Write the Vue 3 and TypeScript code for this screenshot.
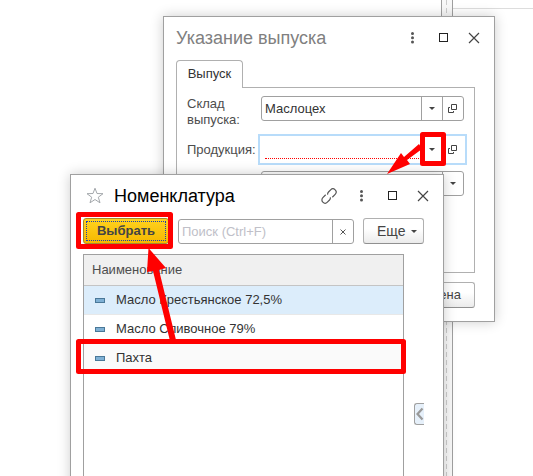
<script setup lang="ts">
import { ref } from 'vue'

interface Item {
  id: number
  name: string
}

const items: Item[] = [
  { id: 1, name: 'Масло Крестьянское 72,5%' },
  { id: 2, name: 'Масло Сливочное 79%' },
  { id: 3, name: 'Пахта' },
]
const selectedId = ref(1)
const warehouse = ref('Маслоцех')
const product = ref('')
const extra = ref('')
const search = ref('')
</script>

<template>
  <main class="desktop">
    <div class="backdrop">
      <div class="splitter"></div>
      <div class="side"></div>
    </div>

    <section class="window release" aria-labelledby="release-title">
      <header class="titlebar">
        <h2 id="release-title" class="title muted">Указание выпуска</h2>
        <div class="controls">
          <button type="button" class="ctl" aria-label="Меню">
            <svg viewBox="0 0 12 12"><g fill="#555"><circle cx="6.5" cy="1.6" r="1.5" /><circle cx="6.5" cy="5.8" r="1.5" /><circle cx="6.5" cy="10" r="1.5" /></g></svg>
          </button>
          <button type="button" class="ctl" aria-label="Развернуть">
            <svg viewBox="0 0 12 12"><rect x="2.5" y="1.5" width="8" height="8" fill="none" stroke="#222" /></svg>
          </button>
          <button type="button" class="ctl" aria-label="Закрыть">
            <svg viewBox="0 0 12 12"><path d="M1 1 11 11M11 1 1 11" stroke="#444" stroke-width="1.2" fill="none" /></svg>
          </button>
        </div>
      </header>

      <div class="tabs"><button type="button" class="tab">Выпуск</button></div>
      <div class="panel">
        <div class="row">
          <label for="warehouse">Склад выпуска:</label>
          <div class="field">
            <input id="warehouse" v-model="warehouse" type="text" />
            <button type="button" class="part" aria-label="Выбрать из списка"><i class="caret"></i></button>
            <button type="button" class="part" aria-label="Открыть">
              <svg class="open" viewBox="0 0 10 10"><path d="M3.5.5h5v5h-5zM2 3.500H.5v5h5V7" fill="none" stroke="#444" /></svg>
            </button>
          </div>
        </div>
        <div class="row">
          <label for="product">Продукция:</label>
          <div class="field active">
            <div class="required"><input id="product" v-model="product" type="text" /></div>
            <button type="button" class="part" aria-label="Выбрать из списка"><i class="caret"></i></button>
            <button type="button" class="part" aria-label="Открыть">
              <svg class="open" viewBox="0 0 10 10"><path d="M3.500.5h5v5h-5zM2 3.500H.5v5h5V7" fill="none" stroke="#444" /></svg>
            </button>
          </div>
        </div>
        <div class="row">
          <span></span>
          <div class="field">
            <input v-model="extra" type="text" aria-label="Значение" />
            <button type="button" class="part" aria-label="Выбрать из списка"><i class="caret"></i></button>
          </div>
        </div>
      </div>
      <footer class="footer"><button type="button" class="btn">Отмена</button></footer>
    </section>

    <section class="window catalog" aria-labelledby="catalog-title">
      <header class="titlebar">
        <button type="button" class="star" aria-label="В избранное">
          <svg viewBox="0 0 18 17"><path d="M9 1.200 11 6.500 17 6.700 12.300 10.200 14 15.800 9 12.500 4 15.800 5.700 10.200 1 6.700 7 6.500Z" fill="none" stroke="#a4a8ac" /></svg>
        </button>
        <h2 id="catalog-title" class="title">Номенклатура</h2>
        <button type="button" class="link" aria-label="Получить ссылку">
          <svg viewBox="0 0 16 16"><g transform="rotate(-45 8 8)" fill="none" stroke="#555" stroke-width="1.200"><path d="M6.500 4.800H2.500a3.200 3.200 0 0 0 0 6.400H5.500a3.200 3.200 0 0 0 2.500-1.300" /><path d="M9.500 11.200H13.500a3.200 3.200 0 0 0 0-6.400H10.500A3.200 3.200 0 0 0 8 6.100" /></g></svg>
        </button>
        <div class="controls">
          <button type="button" class="ctl" aria-label="Меню">
            <svg viewBox="0 0 12 12"><g fill="#555"><circle cx="6.5" cy="1.6" r="1.5" /><circle cx="6.5" cy="5.8" r="1.5" /><circle cx="6.5" cy="10" r="1.5" /></g></svg>
          </button>
          <button type="button" class="ctl" aria-label="Развернуть">
            <svg viewBox="0 0 12 12"><rect x="2.5" y="1.5" width="8" height="8" fill="none" stroke="#222" /></svg>
          </button>
          <button type="button" class="ctl" aria-label="Закрыть">
            <svg viewBox="0 0 12 12"><path d="M1 1 11 11M11 1 1 11" stroke="#444" stroke-width="1.2" fill="none" /></svg>
          </button>
        </div>
      </header>

      <div class="toolbar">
        <button type="button" class="btn primary">Выбрать</button>
        <div class="field search">
          <input v-model="search" type="text" placeholder="Поиск (Ctrl+F)" aria-label="Поиск" />
          <button type="button" class="part" aria-label="Очистить" @click="search = ''">
            <svg class="clear" viewBox="0 0 8 8"><path d="M1.500 1.500 6.500 6.500M6.500 1.500 1.500 6.500" stroke="#555" fill="none" /></svg>
          </button>
        </div>
        <button type="button" class="btn more">Еще <i class="caret"></i></button>
      </div>

      <div class="content">
        <div class="grid">
          <table>
            <thead><tr><th scope="col">Наименование</th></tr></thead>
            <tbody>
              <tr v-for="item in items" :key="item.id" :class="{ selected: item.id === selectedId }" @click="selectedId = item.id">
                <td><div class="cell"><i class="mark"></i>{{ item.name }}</div></td>
              </tr>
            </tbody>
          </table>
        </div>
        <button type="button" class="expand" aria-label="Показать панель">
          <svg viewBox="0 0 9 20"><path d="M7.500 4.500 2.500 10 7.500 15.500" fill="none" stroke="#999" stroke-width="2.200" /></svg>
        </button>
      </div>
    </section>

    <svg class="notes" width="533" height="476" viewBox="0 0 533 476" aria-hidden="true">
      <g fill="none" stroke="#f00" stroke-width="5" stroke-linejoin="round">
        <rect x="422.5" y="134.500" width="21" height="29" />
        <rect x="78.500" y="214.500" width="92" height="32" />
        <rect x="78.500" y="341.500" width="325" height="30" />
      </g>
      <g fill="#f00">
        <path d="M387 174 401 153 404 157 419 144 422 149 407 160 410 164Z" />
        <path d="M148.500 248 147 272 153 271 170 341 176 340 159 270 166 268Z" />
      </g>
    </svg>
  </main>
</template>

<style>
body {
  margin: 0;
  background: #fff;
}
</style>

<style scoped>
.desktop {
  position: relative;
  height: 100vh;
  overflow: hidden;
  font-family: 'Liberation Sans', Arial, sans-serif;
  font-size: 13px;
  line-height: 16px;
  color: #333;
}
.desktop * {
  box-sizing: border-box;
}
button,
input {
  margin: 0;
  padding: 0;
  border: 0;
  background: none;
  font: inherit;
  color: inherit;
  outline: 0;
}
svg {
  display: block;
}
.backdrop {
  display: flex;
  height: 100%;
  padding-left: 441px;
}
.splitter {
  width: 12px;
  flex: none;
  border: solid #a0a0a0;
  border-width: 0 1px;
  background: repeating-linear-gradient(#ccc 0 5px, transparent 5px 8px) 4px 0 / 1px 100% no-repeat #f8f8f8;
}
.side {
  flex: 1;
  height: 9px;
  border-bottom: 1px solid #ddd;
}
.window {
  position: absolute;
  display: flex;
  flex-direction: column;
  background: #fff;
  border: 1px solid #a0a0a0;
  box-shadow: 0 0 12px rgba(0, 0, 0, 0.2);
}
.release {
  left: 163px;
  top: 16px;
  width: 332px;
  padding: 0 19px 13px 12px;
}
.catalog {
  left: 70px;
  top: 174px;
  bottom: -20px;
  width: 374px;
  padding: 0 19px 0 12px;
}
.titlebar {
  display: flex;
  align-items: center;
  height: 43px;
  margin-right: -5px;
  padding-bottom: 2px;
}
.title {
  margin: 0;
  flex: 1;
  font-size: 18px;
  line-height: 24px;
  font-weight: 400;
  color: #000;
}
.muted {
  color: #808080;
}
.controls {
  display: flex;
  gap: 19px;
}
.ctl,
.ctl svg {
  width: 12px;
  height: 12px;
}
.star {
  width: 18px;
  margin: 0 10px 0 3px;
}
.link {
  width: 16px;
  margin-right: 18px;
}
.tabs {
  display: flex;
  height: 27px;
}
.tab {
  width: 67px;
  height: 28px;
  padding-bottom: 2px;
  border: 1px solid #b0b0b0;
  border-bottom: 0;
  border-radius: 4px 4px 0 0;
  background: #fff;
  z-index: 1;
}
.panel {
  display: flex;
  flex-direction: column;
  gap: 6px;
  height: 186px;
  padding: 8px 7px 0 10px;
  border: 1px solid #b0b0b0;
}
.row {
  display: grid;
  grid-template-columns: 71px 1fr;
  align-items: center;
  color: #4d4d4d;
}
.row:first-child {
  align-items: start;
}
.field {
  display: flex;
  height: 25px;
  margin: 0 3px;
  border: 1px solid #a0a0a0;
  border-radius: 3px;
  color: #333;
}
.field input {
  flex: 1;
  min-width: 0;
  width: 100%;
  padding: 0 3px;
}
.part {
  display: flex;
  align-items: center;
  justify-content: center;
  width: 21px;
  flex: none;
  border-left: 1px solid #a0a0a0;
}
.active {
  height: 31px;
  margin: 0;
  padding: 0 2px;
  border: 2px solid #b8dcfa;
  border-radius: 0;
}
.active .part {
  border-color: transparent;
}
.required {
  flex: 1;
  padding: 3px 0 3px 3px;
}
.required input {
  height: 20px;
  border-bottom: 1px dotted #f00;
}
.caret {
  display: block;
  border: solid transparent;
  border-width: 3px 3px 0;
  border-top-color: #444;
}
.open {
  width: 10px;
  height: 10px;
}
.clear {
  width: 8px;
  height: 8px;
}
.footer {
  display: flex;
  justify-content: flex-end;
  padding-top: 9px;
}
.btn {
  height: 26px;
  padding: 0 13px;
  border: 1px solid #b0b0b0;
  border-bottom-color: #909090;
  border-radius: 3px;
  background: linear-gradient(#fff 40%, #ebebeb);
  color: #444;
}
.toolbar {
  display: flex;
  align-items: flex-end;
  gap: 9px;
}
.primary {
  width: 86px;
  padding: 0;
  border-color: #a68a2c;
  background: linear-gradient(#ffd21f, #f5b800);
  font-weight: 700;
  outline: 1px dotted #1a3fb0;
  outline-offset: -4px;
}
.search {
  flex: 1;
  margin: 0;
}
.search input::placeholder {
  color: #c0c0c8;
  opacity: 1;
}
.more {
  display: flex;
  align-items: center;
  gap: 5px;
  width: 61px;
  padding: 0 6px 0 13px;
  font-size: 14px;
}
.content {
  display: flex;
  flex: 1;
  gap: 10px;
  padding-top: 10px;
}
.grid {
  flex: 1;
  border: solid #a0a0a0;
  border-width: 1px 1px 0;
}
table {
  width: 100%;
  border-collapse: separate;
  border-spacing: 0;
}
th {
  height: 31px;
  padding: 0 8px;
  border-bottom: 1px solid #c4c4c4;
  background: #f0f0f0;
  font-weight: 400;
  text-align: left;
  color: #4d4d4d;
}
td {
  height: 29px;
  padding: 0 11px;
  border-bottom: 1px solid #e8e8e8;
}
tr:last-child td {
  border-bottom-color: #fafafa;
  background: #fafafa;
}
.selected td {
  background: #dcedfb;
}
.cell {
  display: flex;
  align-items: center;
  gap: 11px;
}
.mark {
  width: 10px;
  height: 5px;
  border: 1px solid #4a7898;
  background: #7fb0d4;
}
.expand {
  width: 10px;
  height: 22px;
  margin-top: 149px;
  border: 1px solid #a0a0a0;
  border-right: 0;
  border-radius: 3px 0 0 3px;
  background: #e6f0fa;
}
.notes {
  position: absolute;
  left: 0;
  top: 0;
  pointer-events: none;
}
</style>
